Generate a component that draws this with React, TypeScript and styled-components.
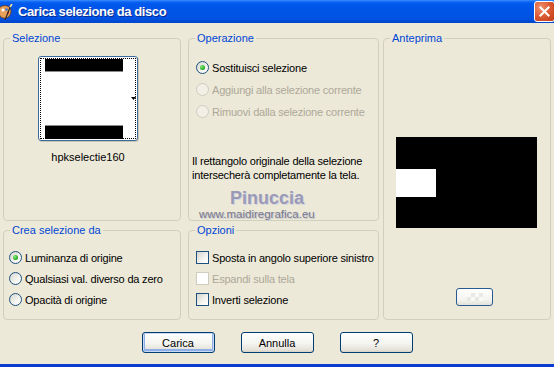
import styled, { createGlobalStyle } from "styled-components"

const GlobalStyle = createGlobalStyle`
  html, body {
    margin: 0;
    padding: 0;
    background: #ECE9D8;
  }
  body {
    font-family: "Liberation Sans", Arial, sans-serif;
    font-size: 11px;
    color: #000;
  }
`

type OptionItem = { label: string; checked?: boolean; disabled?: boolean }

const operations: OptionItem[] = [
    { label: "Sostituisci selezione", checked: true },
    { label: "Aggiungi alla selezione corrente", disabled: true },
    { label: "Rimuovi dalla selezione corrente", disabled: true },
]

const sources: OptionItem[] = [
    { label: "Luminanza di origine", checked: true },
    { label: "Qualsiasi val. diverso da zero" },
    { label: "Opacità di origine" },
]

const options: OptionItem[] = [
    { label: "Sposta in angolo superiore sinistro" },
    { label: "Espandi sulla tela", disabled: true },
    { label: "Inverti selezione" },
]

function AppGlyph() {
    return (
        <AppIcon viewBox="0 0 16 16" width="16" height="16">
            <path d="M2 6 C2 2 7 1 10 2 C14 3 15 7 13 11 C11 15 5 15 3 12 C2 10 2 8 2 6 Z" fill="#E9A15A" stroke="#6B3A12" strokeWidth="0.8" />
            <circle cx="6" cy="6" r="1.6" fill="#FFFFFF" />
            <circle cx="9.5" cy="5.5" r="1.3" fill="#3B6FD8" />
            <circle cx="11" cy="9" r="1.2" fill="#D8402A" />
            <path d="M8 16 L14 1" stroke="#2B2B2B" strokeWidth="1.2" />
            <path d="M13 3 L15 0" stroke="#F4E7A0" strokeWidth="1.6" />
        </AppIcon>
    )
}

function Option({ item, kind }: { item: OptionItem; kind: "radio" | "check" }) {
    return (
        <OptionRow $disabled={item.disabled}>
            {kind === "radio"
                ? <RadioMark $checked={item.checked} $disabled={item.disabled} />
                : <CheckMark $disabled={item.disabled} />}
            <span>{item.label}</span>
        </OptionRow>
    )
}

export default function App() {
    return (
        <>
            <GlobalStyle />
            <Window>
                <TitleBar>
                    <AppGlyph />
                    <Title>Carica selezione da disco</Title>
                    <CloseButton>
                        <svg viewBox="0 0 21 21" width="19" height="19">
                            <path d="M6 6 L15 15 M15 6 L6 15" stroke="#FFFFFF" strokeWidth="2.2" strokeLinecap="square" />
                        </svg>
                    </CloseButton>
                </TitleBar>

                <Panels>
                    <Group $area="sel">
                        <Legend>Selezione</Legend>
                        <SelectionBody>
                            <Thumb>
                                <svg viewBox="0 0 98 83" width="98" height="83">
                                    <rect x="6" y="2" width="78" height="12" fill="#000" />
                                    <rect x="6" y="14" width="78" height="1" fill="#8A8A8A" />
                                    <rect x="6" y="68" width="78" height="1" fill="#8A8A8A" />
                                    <rect x="6" y="69" width="78" height="13" fill="#000" />
                                    <polygon points="92,40 97,40 94.5,43" fill="#000" />
                                </svg>
                            </Thumb>
                            <ThumbName>hpkselectie160</ThumbName>
                        </SelectionBody>
                    </Group>

                    <Group $area="op">
                        <Legend>Operazione</Legend>
                        <OperationBody>
                            <OptionList $gap={1}>
                                {operations.map(o => <Option key={o.label} item={o} kind="radio" />)}
                            </OptionList>
                            <Note>
                                Il rettangolo originale della selezione<br />
                                intersecherà completamente la tela.
                            </Note>
                        </OperationBody>
                    </Group>

                    <Group $area="prev">
                        <Legend>Anteprima</Legend>
                        <PreviewBody>
                            <svg viewBox="0 0 141 91" width="141" height="91" style={{ display: "block" }}>
                                <rect width="141" height="91" fill="#000" />
                                <rect x="0" y="32" width="40" height="28" fill="#FFF" />
                            </svg>
                            <ZoomButton>
                                <Checker />
                            </ZoomButton>
                        </PreviewBody>
                    </Group>

                    <Group $area="crea">
                        <Legend>Crea selezione da</Legend>
                        <ListBody $left={5}>
                            <OptionList $gap={0}>
                                {sources.map(o => <Option key={o.label} item={o} kind="radio" />)}
                            </OptionList>
                        </ListBody>
                    </Group>

                    <Group $area="opt">
                        <Legend>Opzioni</Legend>
                        <ListBody $left={7}>
                            <OptionList $gap={0}>
                                {options.map(o => <Option key={o.label} item={o} kind="check" />)}
                            </OptionList>
                        </ListBody>
                    </Group>
                </Panels>

                <ButtonRow>
                    <PushButton $default>Carica</PushButton>
                    <PushButton>Annulla</PushButton>
                    <PushButton>?</PushButton>
                </ButtonRow>

                <WatermarkName>Pinuccia</WatermarkName>
                <WatermarkUrl>www.maidiregrafica.eu</WatermarkUrl>
            </Window>
        </>
    )
}

const Window = styled.div`
    position: relative;
    width: 554px;
    height: 367px;
    box-sizing: border-box;
    background: #ECE9D8;
    border-bottom: 3px solid #0B3CD2;
    display: flex;
    flex-direction: column;
    overflow: hidden;
`
const TitleBar = styled.div`
    height: 23px;
    flex: none;
    display: flex;
    align-items: center;
    background: linear-gradient(#3C8EFF 0, #0A63F2 2px, #0058EE 4px, #0055E6 45%, #0052E2 80%, #0046CC 100%);
`
const AppIcon = styled.svg`
    flex: none;
    margin-left: -3px;
    margin-top: 1px;
`
const Title = styled.span`
    flex: 1;
    margin-left: 5px;
    color: #FFFFFF;
    font-family: "Liberation Sans", Arial, sans-serif;
    font-size: 13px;
    font-weight: 700;
    letter-spacing: -0.4px;
    text-shadow: 1px 1px 0 #0A2A90;
`
const CloseButton = styled.div`
    flex: none;
    width: 21px;
    height: 21px;
    box-sizing: border-box;
    margin-right: -1px;
    display: flex;
    align-items: center;
    justify-content: center;
    border: 1px solid #FFFFFF;
    border-radius: 3px;
    background: radial-gradient(circle at 30% 30%, #F0906C, #D9552E 55%, #C03A16);
`
const Panels = styled.div`
    display: grid;
    grid-template-columns: 178px 7px 191px 4px 168px;
    grid-template-rows: 189px 96px;
    grid-template-areas:
        "sel . op . prev"
        "crea . opt . prev";
    row-gap: 3px;
    margin: 9px 0 0 3px;
`
const Group = styled.fieldset<{ $area: string }>`
    grid-area: ${p => p.$area};
    height: 100%;
    margin: 0;
    padding: 0;
    min-width: 0;
    box-sizing: border-box;
    border: 1px solid #D0D0BF;
    border-radius: 4px;
`
const Legend = styled.legend`
    margin-left: 6px;
    padding: 0 2px;
    color: #0046D5;
    font-size: 11px;
    line-height: 13px;
`
const SelectionBody = styled.div`
    display: flex;
    flex-direction: column;
    align-items: center;
    padding: 11px 8px 0 0;
`
const Thumb = styled.div`
    position: relative;
    width: 100px;
    height: 85px;
    box-sizing: border-box;
    border: 1px solid #3C6A9C;
    border-radius: 3px;
    background: #FFFFFF;
    box-shadow: 1px 1px 0 #C9C6B6;

    svg {
        display: block;
    }

    &::after {
        content: "";
        position: absolute;
        inset: 1px;
        border: 1px dotted #000;
    }
`
const ThumbName = styled.div`
    margin-top: 10px;
    line-height: 13px;
`
const OperationBody = styled.div`
    padding: 12px 0 0 3px;
`
const ListBody = styled.div<{ $left: number }>`
    padding: 10px 0 0 ${p => p.$left}px;
`
const OptionList = styled.div<{ $gap: number }>`
    display: flex;
    flex-direction: column;
    gap: ${p => p.$gap}px;
    margin-left: ${p => (p.$gap ? 4 : 0)}px;
`
const OptionRow = styled.div<{ $disabled?: boolean }>`
    display: flex;
    align-items: center;
    gap: 3px;
    height: 21px;
    color: ${p => (p.$disabled ? "#ACA899" : "#000")};
    letter-spacing: -0.2px;
    white-space: nowrap;
`
const RadioMark = styled.span<{ $checked?: boolean; $disabled?: boolean }>`
    flex: none;
    width: 13px;
    height: 13px;
    box-sizing: border-box;
    border-radius: 50%;
    border: 1px solid ${p => (p.$disabled ? "#CFCCBF" : "#1C5180")};
    background: ${p => (p.$disabled ? "#F2F0E6" : "linear-gradient(135deg, #D6D5CE 0%, #F4F4F0 60%, #FFFFFF 100%)")};
    display: flex;
    align-items: center;
    justify-content: center;

    &::after {
        content: "";
        display: ${p => (p.$checked ? "block" : "none")};
        width: 5px;
        height: 5px;
        border-radius: 50%;
        background: radial-gradient(circle at 35% 35%, #8EEA86, #2DB52A 55%, #168516);
    }
`
const CheckMark = styled.span<{ $disabled?: boolean }>`
    flex: none;
    width: 13px;
    height: 13px;
    box-sizing: border-box;
    border: 1px solid ${p => (p.$disabled ? "#CFCCBF" : "#1C5180")};
    background: ${p => (p.$disabled ? "#FFFFFF" : "linear-gradient(135deg, #D6D5CE 0%, #F4F4F0 60%, #FFFFFF 100%)")};
`
const Note = styled.p`
    margin: 32px 0 0;
    line-height: 14px;
    letter-spacing: -0.2px;
`
const PreviewBody = styled.div`
    display: flex;
    flex-direction: column;
    align-items: flex-start;
    padding: 92px 0 0 12px;
`
const ZoomButton = styled.div`
    margin: 60px 0 0 60px;
    width: 37px;
    height: 18px;
    box-sizing: border-box;
    border: 1px solid #2A5A92;
    border-radius: 3px;
    background: linear-gradient(#FFFFFF, #F2F2EE 70%, #E2E0D8);
    display: flex;
    align-items: center;
    justify-content: center;
`
const Checker = styled.span`
    width: 16px;
    height: 8px;
    background: repeating-conic-gradient(#E4E4E0 0 25%, #FAFAF8 0 50%) 0 0 / 8px 8px;
    opacity: 0.8;
`
const ButtonRow = styled.div`
    display: flex;
    justify-content: center;
    gap: 26px;
    margin-top: 12px;
`
const PushButton = styled.button<{ $default?: boolean }>`
    width: 73px;
    height: 21px;
    padding: 0;
    box-sizing: border-box;
    border: 1px solid #003C74;
    border-radius: 3px;
    background: linear-gradient(#FFFFFF, #F4F4F0 55%, #E4E1D8 90%, #D6D0C5);
    font-family: "Liberation Sans", Arial, sans-serif;
    font-size: 11px;
    color: #000;
    box-shadow: ${p => (p.$default ? "inset 0 0 0 1px #C6D8F4, inset 0 -1px 0 2px #8FB0E6" : "none")};
`
const WatermarkName = styled.div`
    position: absolute;
    left: 230px;
    top: 188px;
    font-family: "Liberation Sans", Arial, sans-serif;
    font-size: 18px;
    font-weight: 700;
    line-height: 20px;
    color: #9A9AB6;
    text-shadow: 1px 1px 0 #D4D4E0;
`
const WatermarkUrl = styled.div`
    position: absolute;
    left: 199px;
    top: 208px;
    font-family: "Liberation Sans", Arial, sans-serif;
    font-size: 11.5px;
    line-height: 13px;
    color: #77778A;
    text-shadow: 1px 1px 0 #C8C8D2;
`
